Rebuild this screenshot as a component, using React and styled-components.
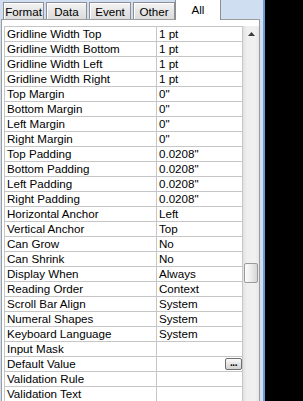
import React from 'react'
import styled, { createGlobalStyle } from 'styled-components'

const GlobalStyle = createGlobalStyle`
  html, body { margin: 0; padding: 0; background: #000; }
  body { font-family: "Liberation Sans", Arial, sans-serif; }
`

const tabs = ['Format', 'Data', 'Event', 'Other', 'All']

const properties = [
  ['Gridline Width Top', '1 pt'],
  ['Gridline Width Bottom', '1 pt'],
  ['Gridline Width Left', '1 pt'],
  ['Gridline Width Right', '1 pt'],
  ['Top Margin', '0"'],
  ['Bottom Margin', '0"'],
  ['Left Margin', '0"'],
  ['Right Margin', '0"'],
  ['Top Padding', '0.0208"'],
  ['Bottom Padding', '0.0208"'],
  ['Left Padding', '0.0208"'],
  ['Right Padding', '0.0208"'],
  ['Horizontal Anchor', 'Left'],
  ['Vertical Anchor', 'Top'],
  ['Can Grow', 'No'],
  ['Can Shrink', 'No'],
  ['Display When', 'Always'],
  ['Reading Order', 'Context'],
  ['Scroll Bar Align', 'System'],
  ['Numeral Shapes', 'System'],
  ['Keyboard Language', 'System'],
  ['Input Mask', ''],
  ['Default Value', '', true],
  ['Validation Rule', ''],
  ['Validation Text', ''],
]

export default function App() {
  return (
    <Screen>
      <GlobalStyle />
      <Sheet>
        <TabStrip>
          {tabs.map((t) => (
            <Tab key={t} $active={t === 'All'} $width={t === 'All' ? 46 : t === 'Event' || t === 'Other' ? 42 : 41}>
              {t}
            </Tab>
          ))}
        </TabStrip>
        <Panel>
          <Grid>
            {properties.map(([name, value, builder]) => (
              <Row key={name}>
                <Label>{name}</Label>
                <Value>
                  <span>{value}</span>
                  {builder && <BuildButton>...</BuildButton>}
                </Value>
              </Row>
            ))}
          </Grid>
          <ScrollBar>
            <ArrowButton>
              <svg width="7" height="4" viewBox="0 0 7 4">
                <polygon points="3.5,0 7,4 0,4" fill="#3c3c3c" />
              </svg>
            </ArrowButton>
            <Track>
              <Thumb $offset={220} />
            </Track>
          </ScrollBar>
        </Panel>
      </Sheet>
    </Screen>
  )
}

const Screen = styled.div`
  width: 303px;
  height: 401px;
  background: #000;
  display: flex;
  overflow: hidden;
`

const Sheet = styled.div`
  width: 265px;
  height: 401px;
  background: #cfdff1;
  border-right: 2px solid #6d9bd6;
  padding-left: 1px;
  box-sizing: border-box;
  display: flex;
  flex-direction: column;
  font-size: 11.6px;
  color: #000;
`

const TabStrip = styled.div`
  height: 19px;
  display: flex;
  align-items: flex-end;
  padding-left: 2px;
  gap: 2px;
  position: relative;
  z-index: 1;
`

const Tab = styled.div`
  width: ${({ $width }) => $width}px;
  height: ${({ $active }) => ($active ? 20 : 17)}px;
  margin-bottom: ${({ $active }) => ($active ? -1 : 0)}px;
  margin-left: ${({ $active }) => ($active ? -2 : 0)}px;
  box-sizing: border-box;
  border: 1px solid #8e8f94;
  border-bottom: none;
  border-top: ${({ $active }) => ($active ? 'none' : '1px solid #8e8f94')};
  background: ${({ $active }) =>
    $active ? '#fff' : 'linear-gradient(#f4f4f4, #e6e6e6 50%, #dcdcdc)'};
  box-shadow: ${({ $active }) => ($active ? 'none' : 'inset 1px 1px 0 #fff')};
  display: flex;
  justify-content: center;
  align-items: ${({ $active }) => ($active ? 'flex-start' : 'center')};
  padding-top: ${({ $active }) => ($active ? 3 : 1)}px;
  line-height: 13px;
  white-space: nowrap;
`

const Panel = styled.div`
  flex: 1;
  min-height: 0;
  margin-right: 3px;
  background: #fff;
  border: 1px solid #9c9c9c;
  border-bottom: none;
  padding: 6px 0 0 2px;
  display: flex;
  align-items: flex-start;
  overflow: hidden;
`

const Grid = styled.div`
  width: 239px;
  border: 1px solid #c6c6c6;
  border-bottom: none;
  box-sizing: border-box;
  flex-shrink: 0;
`

const Row = styled.div`
  display: grid;
  grid-template-columns: 152px 1fr;
  height: 15px;
  border-bottom: 1px solid #c6c6c6;
  box-sizing: border-box;
`

const Label = styled.div`
  border-right: 1px solid #c6c6c6;
  padding-left: 2px;
  line-height: 14px;
  white-space: nowrap;
  overflow: hidden;
`

const Value = styled.div`
  display: flex;
  align-items: center;
  padding-left: 2px;
  line-height: 14px;
  white-space: nowrap;
`

const BuildButton = styled.div`
  margin-left: auto;
  width: 17px;
  height: 12px;
  box-sizing: border-box;
  border: 1px solid #6f6f6f;
  border-radius: 2px;
  background: linear-gradient(#fbfbfb, #e4e4e4 50%, #d2d2d2);
  font-size: 10px;
  font-weight: bold;
  line-height: 8px;
  text-align: center;
  letter-spacing: -0.5px;
  color: #000;
`

const ScrollBar = styled.div`
  width: 18px;
  align-self: stretch;
  display: flex;
  flex-direction: column;
  background: linear-gradient(to right, #e2e2e2, #efefef 25%, #f1f1f1 75%, #e6e6e6);
`

const ArrowButton = styled.div`
  height: 17px;
  display: flex;
  justify-content: center;
  align-items: center;
  padding-bottom: 2px;
  box-sizing: border-box;
`

const Track = styled.div`
  flex: 1;
  padding: 0 1px;
`

const Thumb = styled.div`
  margin-top: ${({ $offset }) => $offset}px;
  height: 20px;
  box-sizing: border-box;
  border: 1px solid #9a9a9a;
  border-radius: 2px;
  background: linear-gradient(to right, #fdfdfd, #ececec 50%, #d6d6d6);
`
